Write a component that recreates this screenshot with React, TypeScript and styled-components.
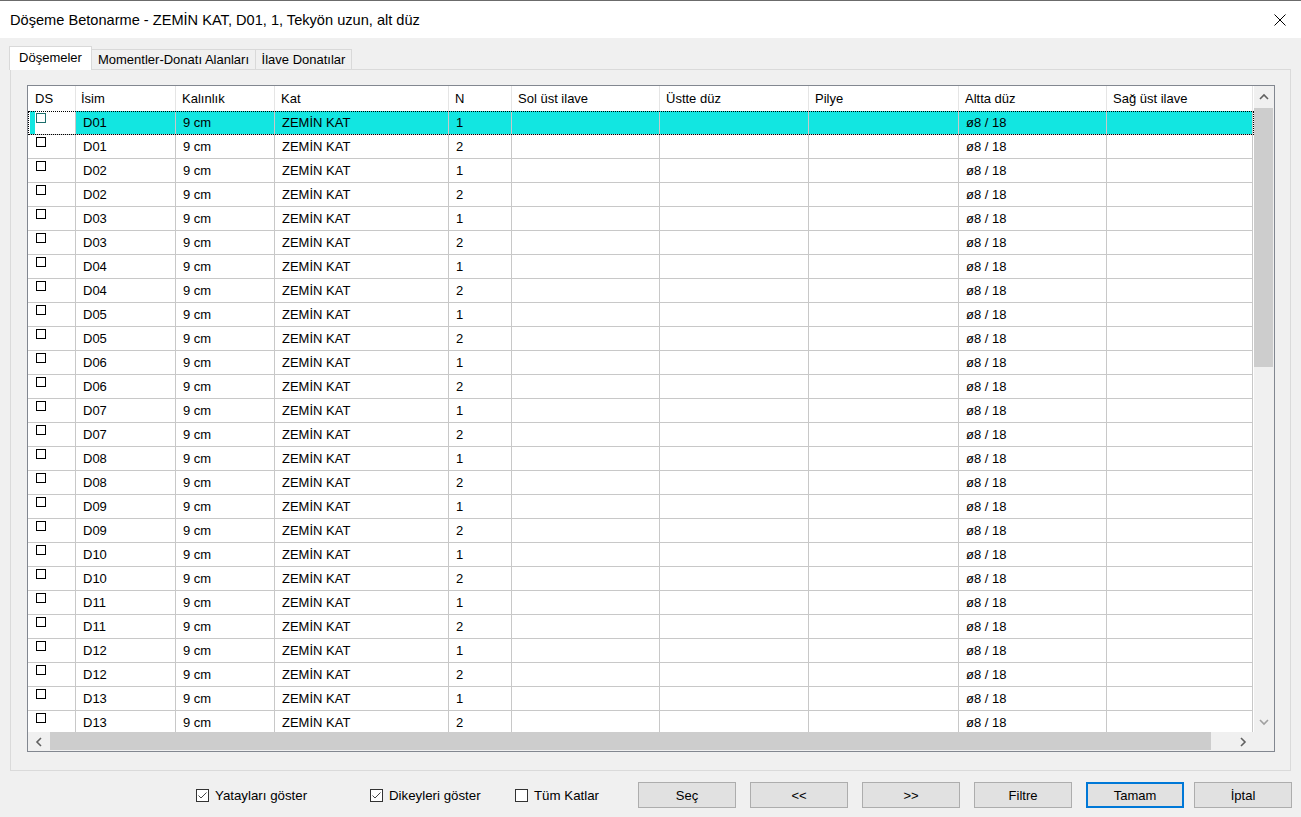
import React from "react";
import styled, { createGlobalStyle } from "styled-components";

const GlobalStyle = createGlobalStyle`
  html, body {
    margin: 0;
    padding: 0;
  }
  body {
    width: 1301px;
    height: 817px;
    overflow: hidden;
    background: #f0f0f0;
    font-family: "Liberation Sans", Arial, sans-serif;
    color: #000;
  }
`;

const COLS = "48px 100px 99px 174px 63px 148px 149px 150px 148px 146px";
const SELECTED = "#12e6e1";

const Window = styled.div`
  width: 1301px;
  height: 817px;
  display: flex;
  flex-direction: column;
  box-sizing: border-box;
  border-top: 1px solid #6b6b6b;
  background: #f0f0f0;
`;

const TitleBar = styled.div`
  height: 37px;
  flex: none;
  display: flex;
  align-items: center;
  justify-content: space-between;
  padding: 0 15px 0 10px;
  background: #fff;
`;

const Title = styled.div`
  font-size: 14.6px;
  white-space: nowrap;
`;

const CloseButton = styled.div`
  width: 12px;
  height: 12px;
  display: flex;
`;

const Body = styled.div`
  flex: 1;
  display: flex;
  flex-direction: column;
  padding: 8px 10px 0 10px;
  border-left: 1px solid #3c3c3c;
  margin-left: -1px;
`;

const TabStrip = styled.div`
  height: 23px;
  flex: none;
  display: flex;
  align-items: flex-end;
  margin-left: -1px;
  position: relative;
  z-index: 1;
`;

const Tab = styled.div<{ $active?: boolean; $w: number }>`
  width: ${(p) => p.$w}px;
  height: ${(p) => (p.$active ? 24 : 20)}px;
  margin-bottom: ${(p) => (p.$active ? -1 : 0)}px;
  margin-left: -1px;
  box-sizing: border-box;
  border: 1px solid #d9d9d9;
  border-bottom: none;
  background: ${(p) => (p.$active ? "#fff" : "#f0f0f0")};
  display: flex;
  align-items: center;
  justify-content: center;
  font-size: 13px;
  white-space: nowrap;
  padding-bottom: ${(p) => (p.$active ? 2 : 0)}px;
  &:first-child {
    margin-left: 0;
  }
`;

const Panel = styled.div`
  height: 702px;
  flex: none;
  box-sizing: border-box;
  border: 1px solid #dadada;
  background: #f0f0f0;
  padding: 15px 15px 18px 16px;
  display: flex;
`;

const Grid = styled.div`
  flex: 1;
  display: grid;
  grid-template-columns: 1fr 20px;
  grid-template-rows: 1fr 19px;
  border: 1px solid #828790;
  background: #fff;
  overflow: hidden;
`;

const TableArea = styled.div`
  overflow: hidden;
  min-width: 0;
  min-height: 0;
`;

const HeaderRow = styled.div`
  display: grid;
  grid-template-columns: ${COLS};
  height: 25px;
`;

const HeaderCell = styled.div<{ $pad?: number }>`
  box-sizing: border-box;
  border-right: 1px solid #e5e5e5;
  padding-left: ${(p) => p.$pad ?? 6}px;
  font-size: 13px;
  line-height: 25px;
  white-space: nowrap;
  overflow: hidden;
`;

const DataRow = styled.div<{ $selected?: boolean }>`
  display: grid;
  grid-template-columns: ${COLS};
  height: 24px;
  outline: ${(p) => (p.$selected ? "1px dotted #000" : "none")};
  outline-offset: -1px;
`;

const Cell = styled.div<{ $selected?: boolean }>`
  box-sizing: border-box;
  border-right: 1px solid #c8c8c8;
  border-bottom: 1px solid #c8c8c8;
  background: ${(p) => (p.$selected ? SELECTED : "#fff")};
  padding-left: 7px;
  font-size: 13px;
  line-height: 24px;
  white-space: nowrap;
  overflow: hidden;
`;

const DsCell = styled.div<{ $selected?: boolean }>`
  box-sizing: border-box;
  border-right: 1px solid #c8c8c8;
  border-bottom: 1px solid #c8c8c8;
  background: #fff;
  box-shadow: ${(p) =>
    p.$selected ? `inset 2px 0 0 #fff, inset 7px 0 0 ${SELECTED}` : "none"};
  padding: 2px 0 0 8px;
`;

const MiniBox = styled.span<{ $selected?: boolean }>`
  display: block;
  width: 10px;
  height: 10px;
  box-sizing: border-box;
  border: 1px solid ${(p) => (p.$selected ? "#1d6e6b" : "#000")};
  background: #fff;
`;

const VScroll = styled.div`
  display: flex;
  flex-direction: column;
  background: #f0f0f0;
`;

const HScroll = styled.div`
  display: flex;
  background: #f0f0f0;
`;

const ArrowBox = styled.div<{ $size: number; $vertical?: boolean }>`
  flex: none;
  ${(p) => (p.$vertical ? `height: ${p.$size}px;` : `width: ${p.$size}px;`)}
  display: flex;
  align-items: center;
  justify-content: center;
`;

const Thumb = styled.div<{ $size: number; $vertical?: boolean }>`
  flex: none;
  background: #cdcdcd;
  ${(p) =>
    p.$vertical
      ? `height: ${p.$size}px; margin-right: 1px;`
      : `width: ${p.$size}px; margin-bottom: 1px;`}
`;

const Track = styled.div`
  flex: 1;
`;

const Corner = styled.div`
  background: #f0f0f0;
`;

const Footer = styled.div`
  height: 46px;
  flex: none;
  display: flex;
  align-items: flex-start;
  padding: 11px 0 0 186px;
`;

const CheckItem = styled.label<{ $w: number }>`
  width: ${(p) => p.$w}px;
  height: 26px;
  flex: none;
  display: flex;
  align-items: center;
  font-size: 13.3px;
  white-space: nowrap;
`;

const CheckBox = styled.span`
  width: 13px;
  height: 13px;
  box-sizing: border-box;
  border: 1px solid #333;
  background: #fff;
  margin-right: 6px;
  display: flex;
  align-items: center;
  justify-content: center;
`;

const Button = styled.div<{ $primary?: boolean; $gap?: number }>`
  width: 98px;
  height: 26px;
  flex: none;
  box-sizing: border-box;
  margin-left: ${(p) => p.$gap ?? 14}px;
  border: ${(p) => (p.$primary ? "2px solid #0078d7" : "1px solid #adadad")};
  background: #e1e1e1;
  display: flex;
  align-items: center;
  justify-content: center;
  font-size: 13px;
`;

const Chevron = ({ dir, color = "#606060" }: { dir: "up" | "down" | "left" | "right"; color?: string }) => {
  const pts: Record<string, string> = {
    up: "1,6 5,2 9,6",
    down: "1,2 5,6 9,2",
    left: "6,1 2,5 6,9",
    right: "2,1 6,5 2,9",
  };
  const vertical = dir === "up" || dir === "down";
  return (
    <svg width={vertical ? 10 : 8} height={vertical ? 8 : 10} viewBox={vertical ? "0 0 10 8" : "0 0 8 10"}>
      <polyline points={pts[dir]} fill="none" stroke={color} strokeWidth="1.6" />
    </svg>
  );
};

const headers: { label: string; pad?: number }[] = [
  { label: "DS", pad: 7 },
  { label: "İsim", pad: 5 },
  { label: "Kalınlık" },
  { label: "Kat" },
  { label: "N" },
  { label: "Sol üst ilave" },
  { label: "Üstte düz" },
  { label: "Pilye" },
  { label: "Altta düz" },
  { label: "Sağ üst ilave" },
];

const rows = Array.from({ length: 26 }, (_, i) => ({
  name: "D" + String(Math.floor(i / 2) + 1).padStart(2, "0"),
  n: (i % 2) + 1,
}));

export default function App() {
  return (
    <>
      <GlobalStyle />
      <Window>
        <TitleBar>
          <Title>Döşeme Betonarme - ZEMİN KAT, D01, 1, Tekyön uzun, alt düz</Title>
          <CloseButton>
            <svg width="12" height="12" viewBox="0 0 12 12">
              <path d="M0.5 0.5 L11.5 11.5 M11.5 0.5 L0.5 11.5" stroke="#000" strokeWidth="1" />
            </svg>
          </CloseButton>
        </TitleBar>
        <Body>
          <TabStrip>
            <Tab $active $w={83}>Döşemeler</Tab>
            <Tab $w={165}>Momentler-Donatı Alanları</Tab>
            <Tab $w={97}>İlave Donatılar</Tab>
          </TabStrip>
          <Panel>
            <Grid>
              <TableArea>
                <HeaderRow>
                  {headers.map((h) => (
                    <HeaderCell key={h.label} $pad={h.pad}>
                      {h.label}
                    </HeaderCell>
                  ))}
                </HeaderRow>
                {rows.map((r, i) => {
                  const sel = i === 0;
                  return (
                    <DataRow key={i} $selected={sel}>
                      <DsCell $selected={sel}>
                        <MiniBox $selected={sel} />
                      </DsCell>
                      <Cell $selected={sel}>{r.name}</Cell>
                      <Cell $selected={sel}>9 cm</Cell>
                      <Cell $selected={sel}>ZEMİN KAT</Cell>
                      <Cell $selected={sel}>{r.n}</Cell>
                      <Cell $selected={sel} />
                      <Cell $selected={sel} />
                      <Cell $selected={sel} />
                      <Cell $selected={sel}>ø8 / 18</Cell>
                      <Cell $selected={sel} />
                    </DataRow>
                  );
                })}
              </TableArea>
              <VScroll>
                <ArrowBox $vertical $size={22}>
                  <Chevron dir="up" />
                </ArrowBox>
                <Thumb $vertical $size={259} />
                <Track />
                <ArrowBox $vertical $size={20}>
                  <Chevron dir="down" color="#a0a0a0" />
                </ArrowBox>
              </VScroll>
              <HScroll>
                <ArrowBox $size={22}>
                  <Chevron dir="left" />
                </ArrowBox>
                <Thumb $size={1161} />
                <Track />
                <ArrowBox $size={22}>
                  <Chevron dir="right" />
                </ArrowBox>
              </HScroll>
              <Corner />
            </Grid>
          </Panel>
          <Footer>
            <CheckItem $w={174}>
              <CheckBox>
                <svg width="11" height="11" viewBox="0 0 11 11">
                  <polyline points="1.5,5.5 4,8 9.5,2.5" fill="none" stroke="#444" strokeWidth="1" />
                </svg>
              </CheckBox>
              Yatayları göster
            </CheckItem>
            <CheckItem $w={145}>
              <CheckBox>
                <svg width="11" height="11" viewBox="0 0 11 11">
                  <polyline points="1.5,5.5 4,8 9.5,2.5" fill="none" stroke="#444" strokeWidth="1" />
                </svg>
              </CheckBox>
              Dikeyleri göster
            </CheckItem>
            <CheckItem $w={109}>
              <CheckBox />
              Tüm Katlar
            </CheckItem>
            <Button>Seç</Button>
            <Button>&lt;&lt;</Button>
            <Button>&gt;&gt;</Button>
            <Button>Filtre</Button>
            <Button $primary>Tamam</Button>
            <Button $gap={10}>İptal</Button>
          </Footer>
        </Body>
      </Window>
    </>
  );
}
